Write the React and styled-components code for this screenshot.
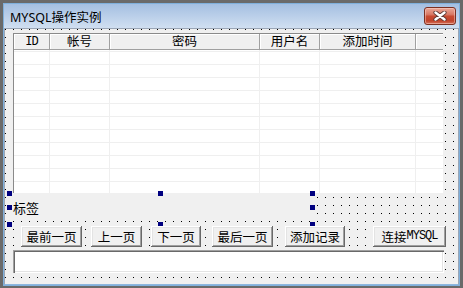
import React from 'react';
import styled, { createGlobalStyle, css } from 'styled-components';

const cjkFont = '"Noto Sans CJK SC", "Noto Sans", sans-serif';
const titleFont = '"Noto Sans", "Noto Sans CJK SC", sans-serif';
const monoFont = '"Liberation Mono", "DejaVu Sans Mono", monospace';

const faceGray = '#f0f0f0';
const shadowGray = '#a0a0a0';
const darkGray = '#696969';

const GlobalStyle = createGlobalStyle`
  html, body {
    margin: 0;
    padding: 0;
  }

  body {
    width: 463px;
    height: 288px;
    overflow: hidden;
    background: #6a6a6a;
    font-family: ${cjkFont};
  }
`;

const Desktop = styled.div`
  width: 463px;
  height: 288px;
  padding: 3px 3px 2px 3px;
  box-sizing: border-box;
`;

const Window = styled.div`
  width: 457px;
  height: 283px;
  box-sizing: border-box;
  display: flex;
  flex-direction: column;
  border: 1px solid #7fb0dc;
  background: #c8d8ed;
`;

const TitleBar = styled.div`
  height: 24px;
  flex: none;
  display: flex;
  align-items: center;
  justify-content: space-between;
  padding: 0 3px 0 6px;
  background: linear-gradient(#a4bfe1, #d0dff1);
`;

const Title = styled.span`
  font-family: ${titleFont};
  font-size: 12.5px;
  color: #000;
  padding-top: 1px;
`;

const CloseButton = styled.div`
  width: 32px;
  height: 18px;
  box-sizing: border-box;
  display: flex;
  align-items: center;
  justify-content: center;
  border: 1px solid #7b3022;
  border-radius: 3px;
  background: linear-gradient(
    #eaa898 0%,
    #d97a66 40%,
    #c84b32 52%,
    #c0432b 80%,
    #d5735c 100%
  );
  box-shadow: inset 0 0 0 1px rgba(255, 220, 210, 0.45);
`;

// the design surface of the form, with its 8px dot grid
const Canvas = styled.div`
  position: relative;
  flex: 1;
  border: 1px solid #9aa6b6;
  border-bottom-color: #8eb6de;
  background-color: ${faceGray};
  background-image: linear-gradient(90deg, ${faceGray} 7px, transparent 7px),
    linear-gradient(${faceGray} 7px, #000 7px);
  background-size: 8px 8px;
  background-position: 1px 1px;
`;

// every control sits where it was dropped on the form
const placed = css`
  position: absolute;
  left: ${({ $x }) => $x}px;
  top: ${({ $y }) => $y}px;
  width: ${({ $w }) => $w}px;
  height: ${({ $h }) => $h}px;
  box-sizing: border-box;
`;

const ListView = styled.div`
  ${placed};
  display: flex;
  flex-direction: column;
  background: #fff;
  border-left: 1px solid #8a8a8a;
  border-top: 1px solid #8a8a8a;
`;

const HeaderRow = styled.div`
  display: flex;
  height: 16px;
  flex: none;
  background: ${faceGray};
  border-bottom: 1px solid ${shadowGray};
  box-sizing: border-box;
`;

const HeaderCell = styled.div`
  width: ${({ $w }) => ($w ? `${$w}px` : 'auto')};
  flex: ${({ $w }) => ($w ? 'none' : '1')};
  box-sizing: border-box;
  display: flex;
  align-items: center;
  justify-content: center;
  border-right: ${({ $w }) => ($w ? `1px solid ${shadowGray}` : 'none')};
  box-shadow: inset 1px 1px #fff;
  font-size: 12.5px;
  line-height: 1;
  color: #000;
`;

const Body = styled.div`
  flex: 1;
  display: flex;
  background-image: repeating-linear-gradient(
    to bottom,
    #efefef 0 1px,
    transparent 1px 13px
  );
  background-position: 0 1px;
`;

const BodyColumn = styled.div`
  width: ${({ $w }) => ($w ? `${$w}px` : 'auto')};
  flex: ${({ $w }) => ($w ? 'none' : '1')};
  box-sizing: border-box;
  border-right: ${({ $w }) => ($w ? '1px solid #efefef' : 'none')};
`;

const Label = styled.div`
  ${placed};
  display: flex;
  align-items: center;
  padding-left: 4px;
  background: ${faceGray};
  font-size: 13px;
  color: #000;
`;

const Handle = styled.div`
  position: absolute;
  left: ${({ $x }) => $x}px;
  top: ${({ $y }) => $y}px;
  width: 5px;
  height: 5px;
  background: #000080;
`;

const Button = styled.div`
  ${placed};
  display: flex;
  align-items: center;
  justify-content: center;
  padding-bottom: 1px;
  background: ${faceGray};
  box-shadow: inset -1px -1px ${darkGray}, inset 1px 1px #fff,
    inset -2px -2px ${shadowGray}, inset 2px 2px #e3e3e3;
  font-size: 12.5px;
  color: #000;
`;

const Latin = styled.span`
  font-family: ${monoFont};
  font-size: 12px;
  letter-spacing: -1px;
`;

const TextBox = styled.div`
  ${placed};
  background: #fff;
  box-shadow: inset 1px 1px ${shadowGray}, inset 2px 2px ${darkGray},
    inset -1px -1px #fff, inset -2px -2px #e3e3e3;
`;

const columns = [
  { title: <Latin>ID</Latin>, w: 36 },
  { title: '帐号', w: 60 },
  { title: '密码', w: 150 },
  { title: '用户名', w: 60 },
  { title: '添加时间', w: 96 },
  { title: '', w: 0 },
];

const buttons = [
  { text: '最前一页', x: 16, w: 61 },
  { text: '上一页', x: 86, w: 51 },
  { text: '下一页', x: 146, w: 50 },
  { text: '最后一页', x: 207, w: 61 },
  { text: '添加记录', x: 280, w: 60 },
  {
    text: (
      <>
        连接<Latin>MYSQL</Latin>
      </>
    ),
    x: 368,
    w: 73,
  },
];

const handles = [
  [2, 162],
  [153, 162],
  [305, 162],
  [2, 176],
  [305, 176],
  [2, 193],
  [153, 193],
  [305, 193],
];

const CloseGlyph = () => (
  <svg width="14" height="10" viewBox="0 0 14 10">
    <path
      d="M2.5 1.5 L11.5 8.5 M11.5 1.5 L2.5 8.5"
      stroke="#5c3a35"
      strokeWidth="4.2"
      strokeLinecap="round"
    />
    <path
      d="M2.5 1.5 L11.5 8.5 M11.5 1.5 L2.5 8.5"
      stroke="#fff"
      strokeWidth="2.4"
      strokeLinecap="round"
    />
  </svg>
);

const App = () => (
  <>
    <GlobalStyle />
    <Desktop>
      <Window>
        <TitleBar>
          <Title>MYSQL操作实例</Title>
          <CloseButton>
            <CloseGlyph />
          </CloseButton>
        </TitleBar>
        <Canvas>
          <ListView $x={8} $y={4} $w={430} $h={160}>
            <HeaderRow>
              {columns.map((col, i) => (
                <HeaderCell key={i} $w={col.w}>
                  {col.title}
                </HeaderCell>
              ))}
            </HeaderRow>
            <Body>
              {columns.map((col, i) => (
                <BodyColumn key={i} $w={col.w} />
              ))}
            </Body>
          </ListView>

          <Label $x={4} $y={164} $w={304} $h={28}>
            标签
          </Label>
          {handles.map(([x, y]) => (
            <Handle key={`${x}-${y}`} $x={x} $y={y} />
          ))}

          {buttons.map((b, i) => (
            <Button key={i} $x={b.x} $y={197} $w={b.w} $h={21}>
              {b.text}
            </Button>
          ))}

          <TextBox $x={8} $y={221} $w={431} $h={23} />
        </Canvas>
      </Window>
    </Desktop>
  </>
);

export default App;
